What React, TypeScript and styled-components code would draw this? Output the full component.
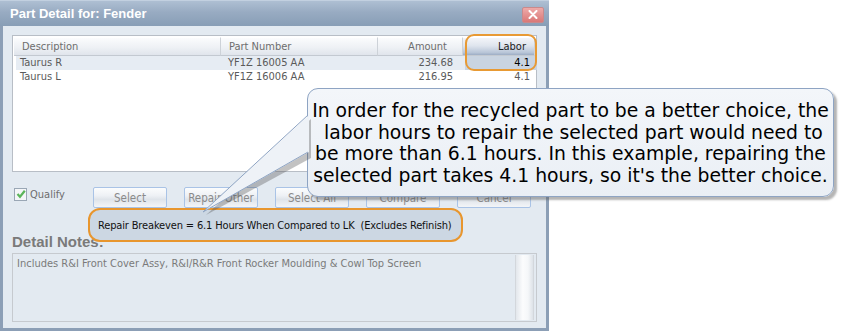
import React from 'react';
import styled, { createGlobalStyle } from 'styled-components';

const GlobalStyle = createGlobalStyle`
  body {
    margin: 0;
    background: #ffffff;
  }
`;

type Part = {
    description: string;
    partNumber: string;
    amount: string;
    labor: string;
};

const parts: Part[] = [
    { description: 'Taurus R', partNumber: 'YF1Z 16005 AA', amount: '234.68', labor: '4.1' },
    { description: 'Taurus L', partNumber: 'YF1Z 16006 AA', amount: '216.95', labor: '4.1' },
];

const buttons = ['Select', 'Repair Other', 'Select All', 'Compare', 'Cancel'];

const Page = styled.div`
    position: relative;
    width: 849px;
    height: 331px;
    overflow: hidden;
    font-family: "DejaVu Sans Condensed", "DejaVu Sans", sans-serif;
    font-stretch: condensed;
`;

const Window = styled.div`
    width: 549px;
    height: 331px;
    display: flex;
    flex-direction: column;
`;

const TitleBar = styled.div`
    height: 26px;
    flex: none;
    display: flex;
    align-items: center;
    justify-content: space-between;
    padding: 0 5px 0 10px;
    background: linear-gradient(#aebfd3 0%, #98abc2 45%, #889eb6 100%);
    border-top: 1px solid #c2d0e0;
    box-sizing: border-box;
`;

const Title = styled.span`
    color: #ffffff;
    font-family: "Liberation Sans", sans-serif;
    font-weight: bold;
    font-size: 13px;
`;

const CloseButton = styled.div`
    width: 20px;
    height: 14px;
    margin-top: 2px;
    border-radius: 2px;
    background: linear-gradient(#eeaaa9, #d97877);
    border: 1px solid #c98a8c;
    display: flex;
    align-items: center;
    justify-content: center;
`;

const Body = styled.div`
    flex: 1;
    display: flex;
    flex-direction: column;
    padding: 9px 9px 0 9px;
    background: #e3eaf1;
    border: 3px solid #8c9fb6;
    border-top: none;
`;

const ListBox = styled.div`
    height: 137px;
    box-sizing: border-box;
    border: 1px solid #b8bec6;
    padding: 1px;
    background: #ffffff;
`;

const Columns = styled.div`
    display: grid;
    grid-template-columns: 207px 157px 85px 72px;
`;

const HeaderRow = styled(Columns)`
    height: 19px;
`;

const HeaderCell = styled.div<{ $right?: boolean; $active?: boolean }>`
    box-sizing: border-box;
    height: 19px;
    line-height: 18px;
    font-size: 11px;
    color: ${(p) => (p.$active ? '#222' : '#6d6d6d')};
    text-align: ${(p) => (p.$right ? 'right' : 'left')};
    padding: ${(p) => (p.$right ? '0 8px 0 0' : '0 0 0 8px')};
    border-right: 1px solid #cdd2d8;
    border-top: 1px solid #ffffff;
    border-bottom: 1px solid #c3c9d1;
    background: ${(p) =>
        p.$active
            ? 'linear-gradient(#f3f5f9 0%, #dfe5ee 45%, #b9c6d8 85%, #9dadc4 100%)'
            : 'linear-gradient(#fbfcfd 0%, #eef1f5 55%, #e0e5ec 100%)'};
`;

const Row = styled(Columns)<{ $selected?: boolean }>`
    height: 14px;
    margin-left: 2px;
    background: ${(p) => (p.$selected ? '#e6ecf3' : 'transparent')};
`;

const Cell = styled.div<{ $right?: boolean; $hot?: boolean; $pad?: number }>`
    font-size: 11px;
    line-height: 14px;
    white-space: nowrap;
    color: ${(p) => (p.$hot ? '#000' : '#5a5a5a')};
    text-align: ${(p) => (p.$right ? 'right' : 'left')};
    padding: ${(p) => (p.$right ? `0 ${p.$pad ?? 8}px 0 0` : `0 0 0 ${p.$pad ?? 4}px`)};
    background: ${(p) => (p.$hot ? '#c9d4e1' : 'transparent')};
`;

const Controls = styled.div`
    display: flex;
    align-items: center;
    margin-top: 15px;
    height: 21px;
`;

const Qualify = styled.label`
    width: 81px;
    display: flex;
    align-items: center;
    gap: 3px;
    padding-left: 2px;
    box-sizing: border-box;
    font-size: 11px;
    color: #6d6d6d;
    margin-top: -7px;
`;

const CheckBox = styled.span`
    width: 11px;
    height: 11px;
    border: 1px solid #9aa7b5;
    background: #f4f6f8;
    display: flex;
    align-items: center;
    justify-content: center;
`;

const ButtonRow = styled.div`
    display: flex;
    gap: 17px;
`;

const DialogButton = styled.div`
    width: 74px;
    height: 21px;
    box-sizing: border-box;
    border: 1px solid #a9c3e6;
    border-radius: 2px;
    background: linear-gradient(#fbfcfd 0%, #eef1f5 40%, #dfe4ea 60%, #f3f5f8 100%);
    font-size: 11.5px;
    color: #8a8a8a;
    display: flex;
    align-items: center;
    justify-content: center;
    white-space: nowrap;
`;

const NotesLabel = styled.div`
    margin-top: 25px;
    font-family: "Liberation Sans", sans-serif;
    font-weight: bold;
    font-size: 15px;
    line-height: 17px;
    color: #7a7a7a;
`;

const NotesBox = styled.div`
    margin-top: 3px;
    height: 69px;
    box-sizing: border-box;
    border: 1px solid #c6cacf;
    display: flex;
    justify-content: space-between;
    padding: 1px 2px 1px 4px;
`;

const NotesText = styled.div`
    font-size: 11px;
    line-height: 16px;
    color: #7a7a7a;
    padding-top: 1px;
`;

const ScrollTrack = styled.div`
    width: 17px;
    border-left: 1px solid #d3d7dc;
    border-right: 1px solid #d3d7dc;
    background: linear-gradient(90deg, #e3e7ec 0%, #fbfcfd 40%, #f5f7f9 70%, #dde2e8 100%);
`;

const LaborRing = styled.div`
    position: absolute;
    left: 465px;
    top: 34px;
    width: 72px;
    height: 37px;
    box-sizing: border-box;
    border: 2px solid #e89a34;
    border-radius: 9px;
`;

const Breakeven = styled.div`
    position: absolute;
    left: 88px;
    top: 208px;
    width: 375px;
    height: 34px;
    box-sizing: border-box;
    border: 2px solid #e8962e;
    border-radius: 12px;
    background: #ccd7e3;
    font-size: 11px;
    letter-spacing: -0.15px;
    color: #111;
    display: flex;
    align-items: center;
    padding-left: 8px;
    white-space: pre;
`;

const Callout = styled.div`
    position: absolute;
    left: 307px;
    top: 88px;
    width: 527px;
    height: 109px;
    box-sizing: border-box;
    border: 1px solid #8ea4c3;
    border-radius: 11px;
    background: linear-gradient(#f3f6fa, #eaeff5);
    box-shadow: 3px 3px 2px rgba(90, 90, 90, 0.45);
    padding-top: 11px;
    font-family: "DejaVu Sans", sans-serif;
    font-stretch: normal;
    font-size: 18.8px;
    line-height: 21.7px;
    color: #000;
    text-align: center;
`;

const CalloutLine = styled.div`
    white-space: pre;
`;

const Pointer = styled.svg`
    position: absolute;
    left: 0;
    top: 0;
    pointer-events: none;
`;

const calloutLines = [
    'In order for the recycled part to be a better choice, the',
    ' labor hours to repair the selected part would need to',
    'be more than 6.1 hours. In this example, repairing the',
    "selected part takes 4.1 hours, so it's the better choice.",
];

export default function App() {
    return (
        <Page>
            <GlobalStyle />
            <Window>
                <TitleBar>
                    <Title>Part Detail for: Fender</Title>
                    <CloseButton>
                        <svg width="10" height="9" viewBox="0 0 10 9">
                            <path d="M1.5 1 L8.5 8 M8.5 1 L1.5 8" stroke="#fff" strokeWidth="2" strokeLinecap="round" />
                        </svg>
                    </CloseButton>
                </TitleBar>
                <Body>
                    <ListBox>
                        <HeaderRow>
                            <HeaderCell>Description</HeaderCell>
                            <HeaderCell>Part Number</HeaderCell>
                            <HeaderCell $right style={{ paddingRight: 15 }}>Amount</HeaderCell>
                            <HeaderCell $right $active>Labor</HeaderCell>
                        </HeaderRow>
                        {parts.map((part, i) => (
                            <Row key={part.partNumber} $selected={i === 0}>
                                <Cell>{part.description}</Cell>
                                <Cell $pad={5}>{part.partNumber}</Cell>
                                <Cell $right $pad={12}>{part.amount}</Cell>
                                <Cell $right $hot={i === 0} $pad={7}>{part.labor}</Cell>
                            </Row>
                        ))}
                    </ListBox>
                    <Controls>
                        <Qualify>
                            <CheckBox>
                                <svg width="10" height="10" viewBox="0 0 10 10">
                                    <path d="M1.5 5 L4 7.8 L8.8 1.8" stroke="#5bb55a" strokeWidth="2.2" fill="none" />
                                </svg>
                            </CheckBox>
                            Qualify
                        </Qualify>
                        <ButtonRow>
                            {buttons.map((b) => (
                                <DialogButton key={b}>{b}</DialogButton>
                            ))}
                        </ButtonRow>
                    </Controls>
                    <NotesLabel>Detail Notes:</NotesLabel>
                    <NotesBox>
                        <NotesText>Includes R&amp;I Front Cover Assy, R&amp;I/R&amp;R Front Rocker Moulding &amp; Cowl Top Screen</NotesText>
                        <ScrollTrack />
                    </NotesBox>
                </Body>
            </Window>

            <LaborRing />
            <Breakeven>{'Repair Breakeven = 6.1 Hours When Compared to LK  (Excludes Refinish)'}</Breakeven>

            <Callout>
                {calloutLines.map((line) => (
                    <CalloutLine key={line}>{line}</CalloutLine>
                ))}
            </Callout>
            <Pointer width="849" height="331" viewBox="0 0 849 331">
                <polygon points="311,119 206,215 311,158" fill="rgba(80,80,80,0.35)" />
                <polygon points="309,115 203,212 309,152" fill="#eef2f7" />
                <polyline points="308,115 203,212 308,152" fill="none" stroke="#8ea4c3" strokeWidth="1" />
            </Pointer>
        </Page>
    );
}
